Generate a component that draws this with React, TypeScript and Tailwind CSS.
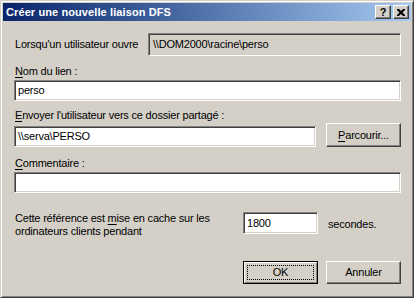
const sunken =
  'border border-t-[#808080] border-l-[#808080] border-r-white border-b-white shadow-[inset_1px_1px_0_#404040,inset_-1px_-1px_0_#d4d0c8]';
const raised =
  'border border-t-white border-l-white border-r-[#404040] border-b-[#404040] shadow-[inset_-1px_-1px_0_#808080]';

function Key({ children }: { children: string }) {
  return <span className="underline decoration-1 underline-offset-[2px]">{children}</span>;
}

function EditBox({ value, className = '' }: { value: string; className?: string }) {
  return (
    <div className={`${sunken} bg-white flex items-center px-[3px] ${className}`}>
      <span className="leading-[13px]">{value}</span>
    </div>
  );
}

export default function App() {
  return (
    <div className="w-[414px] h-[298px] bg-[#d4d0c8] font-['Liberation_Sans',Arial,sans-serif] text-[11px] leading-[13px] text-black tracking-[-0.2px]">
      <div className="w-[414px] h-[298px] p-[2px] border border-t-[#d4d0c8] border-l-[#d4d0c8] border-r-[#404040] border-b-[#404040] shadow-[inset_1px_1px_0_#fff,inset_-1px_-1px_0_#808080] flex flex-col">
        {/* title bar */}
        <div className="h-[18px] flex items-center bg-gradient-to-r from-[#0a246a] to-[#a6caf0] pl-[3px] pr-[2px]">
          <span className="text-white font-bold tracking-[0.1px] flex-1">Créer une nouvelle liaison DFS</span>
          <div className={`${raised} bg-[#d4d0c8] w-[16px] h-[14px] flex items-center justify-center text-[11px] font-bold leading-none`}>
            ?
          </div>
          <div className={`${raised} bg-[#d4d0c8] w-[16px] h-[14px] ml-[2px] flex items-center justify-center`}>
            <svg width="8" height="7" viewBox="0 0 8 7">
              <path d="M0 0h2l2 2 2-2h2v1l-2.5 2.5L8 6v1H6L4 5 2 7H0V6l2.5-2.5L0 1z" fill="#000" />
            </svg>
          </div>
        </div>

        {/* body */}
        <div className="flex flex-col pl-[11px] pr-[10px]">
          <div className="flex items-center mt-[12px]">
            <span className="w-[134px] pl-[1px]">Lorsqu'un utilisateur ouvre</span>
            <div className={`${sunken} flex-1 h-[23px] flex items-center px-[4px]`}>
              {'\\\\DOM2000\\racine\\perso'}
            </div>
          </div>

          <span className="mt-[9px] pl-[1px]">
            <Key>N</Key>om du lien :
          </span>
          <EditBox value="perso" className="mt-[2px] h-[21px]" />

          <span className="mt-[8px] pl-[1px]">
            <Key>E</Key>nvoyer l'utilisateur vers ce dossier partagé :
          </span>
          <div className="flex items-end mt-[1px]">
            <EditBox value={'\\\\serva\\PERSO'} className="w-[302px] h-[21px]" />
            <button className={`${raised} bg-[#d4d0c8] ml-[10px] w-[75px] h-[24px] flex items-center justify-center`}>
              <span>
                <Key>P</Key>arcourir...
              </span>
            </button>
          </div>

          <span className="mt-[10px] pl-[1px]">
            <Key>C</Key>ommentaire :
          </span>
          <EditBox value="" className="mt-[2px] h-[21px]" />

          <div className="flex mt-[19px]">
            <span className="w-[229px] pl-[1px]">
              Cette référence est <Key>m</Key>ise en cache sur les
              <br />
              ordinateurs clients pendant
            </span>
            <EditBox value="1800" className="w-[75px] h-[22px]" />
            <span className="ml-[10px] mt-[6px]">secondes.</span>
          </div>

          <div className="flex mt-[23px] pl-[229px]">
            <button className="w-[75px] h-[23px] border border-black bg-[#d4d0c8] shadow-[inset_1px_1px_0_#fff,inset_-1px_-1px_0_#808080] p-[3px] flex">
              <span className="flex-1 border border-dotted border-black flex items-center justify-center">OK</span>
            </button>
            <button className={`${raised} bg-[#d4d0c8] ml-[8px] w-[75px] h-[23px] flex items-center justify-center`}>
              Annuler
            </button>
          </div>
        </div>
      </div>
    </div>
  );
}
